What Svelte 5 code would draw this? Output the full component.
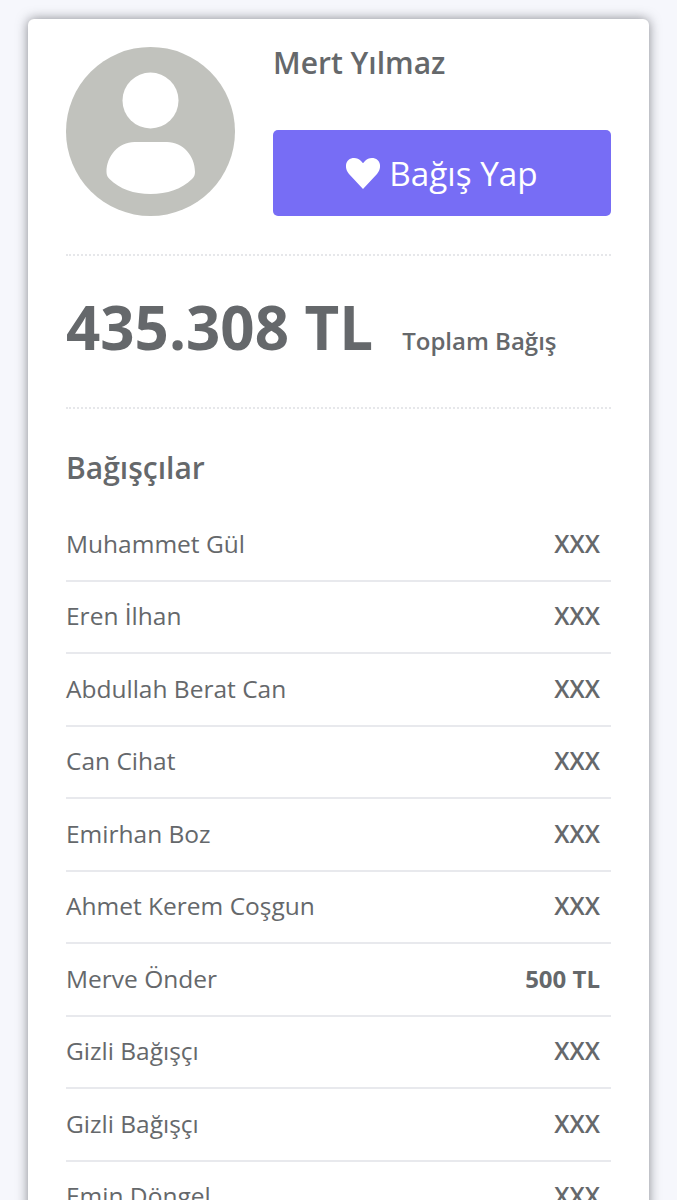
<script lang="ts">
  type Donor = { name: string; amount: string; known?: boolean };

  const donors: Donor[] = [
    { name: 'Muhammet Gül', amount: 'XXX' },
    { name: 'Eren İlhan', amount: 'XXX' },
    { name: 'Abdullah Berat Can', amount: 'XXX' },
    { name: 'Can Cihat', amount: 'XXX' },
    { name: 'Emirhan Boz', amount: 'XXX' },
    { name: 'Ahmet Kerem Coşgun', amount: 'XXX' },
    { name: 'Merve Önder', amount: '500 TL', known: true },
    { name: 'Gizli Bağışçı', amount: 'XXX' },
    { name: 'Gizli Bağışçı', amount: 'XXX' },
    { name: 'Emin Döngel', amount: 'XXX' }
  ];
</script>

<main class="page">
  <section class="card">
    <header class="profile">
      <svg class="avatar" viewBox="0 0 169 169" aria-hidden="true">
        <circle cx="84.5" cy="84.5" r="84.5" fill="#c1c2bd" />
        <circle cx="84.5" cy="53.5" r="28" fill="#fff" />
        <path
          d="M68 95h33c16 0 28 14 28 30 0 3-1 5-3 7-10 10-25 15-41.500 15-16.500 0-31-5-41-15-2-2-3-4-3-7 0-16 12-30 28-30z"
          fill="#fff"
        />
      </svg>
      <div class="who">
        <h1>Mert Yılmaz</h1>
        <button type="button" class="donate">
          <svg class="heart" viewBox="0 0 34 31" aria-hidden="true">
            <path
              d="M17 31 3 16C-1 11.500-1 5 2.500 2 6-1 12-.5 15 3l2 2.300L19 3c3-3.500 9-4 12.500-1C35 5 35 11.500 31 16z"
              fill="#fff"
            />
          </svg>
          Bağış Yap
        </button>
      </div>
    </header>

    <div class="total">
      <strong>435.308 TL</strong>
      <span>Toplam Bağış</span>
    </div>

    <h2>Bağışçılar</h2>
    <ul class="donors">
      {#each donors as donor}
        <li>
          <span class="name">{donor.name}</span>
          <span class="amount" class:known={donor.known}>{donor.amount}</span>
        </li>
      {/each}
    </ul>
  </section>
</main>

<style>
  :global(body) {
    background: #f6f7fc;
    overflow: hidden;
  }

  .page {
    height: 1200px;
    box-sizing: border-box;
    padding: 19px 28px 0;
    overflow: hidden;
    font-family: 'Open Sans', sans-serif;
    color: #65686b;
  }

  .card {
    box-sizing: border-box;
    height: 1300px;
    padding: 27px 38px 0;
    background: #fff;
    border-radius: 6px;
    box-shadow: 0 0 12px rgba(60, 62, 70, 0.6);
  }

  .profile {
    display: flex;
    gap: 38px;
    padding-bottom: 38px;
    margin-top: 1px;
    border-bottom: 2px dotted #e6e7ea;
  }

  .avatar {
    flex: none;
    width: 169px;
    height: 169px;
  }

  .who {
    flex: 1;
    display: flex;
    flex-direction: column;
    justify-content: space-between;
  }

  h1 {
    margin: -1px 0 0;
    font-size: 30px;
    line-height: 34px;
    font-weight: 600;
  }

  .donate {
    height: 86px;
    display: flex;
    align-items: center;
    justify-content: center;
    gap: 9px;
    border: 0;
    border-radius: 5px;
    background: #776df5;
    color: #fff;
    font-family: inherit;
    font-size: 33.3px;
    font-weight: 400;
  }

  .heart {
    width: 34px;
    height: 31px;
  }

  .total {
    display: flex;
    align-items: baseline;
    gap: 29px;
    height: 153px;
    box-sizing: border-box;
    padding-top: 30px;
    border-bottom: 2px dotted #e6e7ea;
  }

  .total strong {
    font-size: 60px;
    line-height: 83px;
    font-weight: 700;
  }

  .total span {
    font-size: 24px;
    font-weight: 600;
    margin-top: -1px;
  }

  h2 {
    margin: 38px 0 0;
    font-size: 30px;
    line-height: 41px;
    font-weight: 600;
  }

  .donors {
    list-style: none;
    margin: 21px 0 0;
    padding: 0;
  }

  li {
    display: flex;
    justify-content: space-between;
    align-items: center;
    box-sizing: border-box;
    height: 72.500px;
    padding: 0 11px 2px 0;
    border-bottom: 2px solid #e8e9ed;
    font-size: 24.5px;
  }

  .amount {
    font-size: 24.5px;
    font-weight: 600;
  }

  .amount.known {
    font-size: 24px;
    font-weight: 700;
  }
</style>
